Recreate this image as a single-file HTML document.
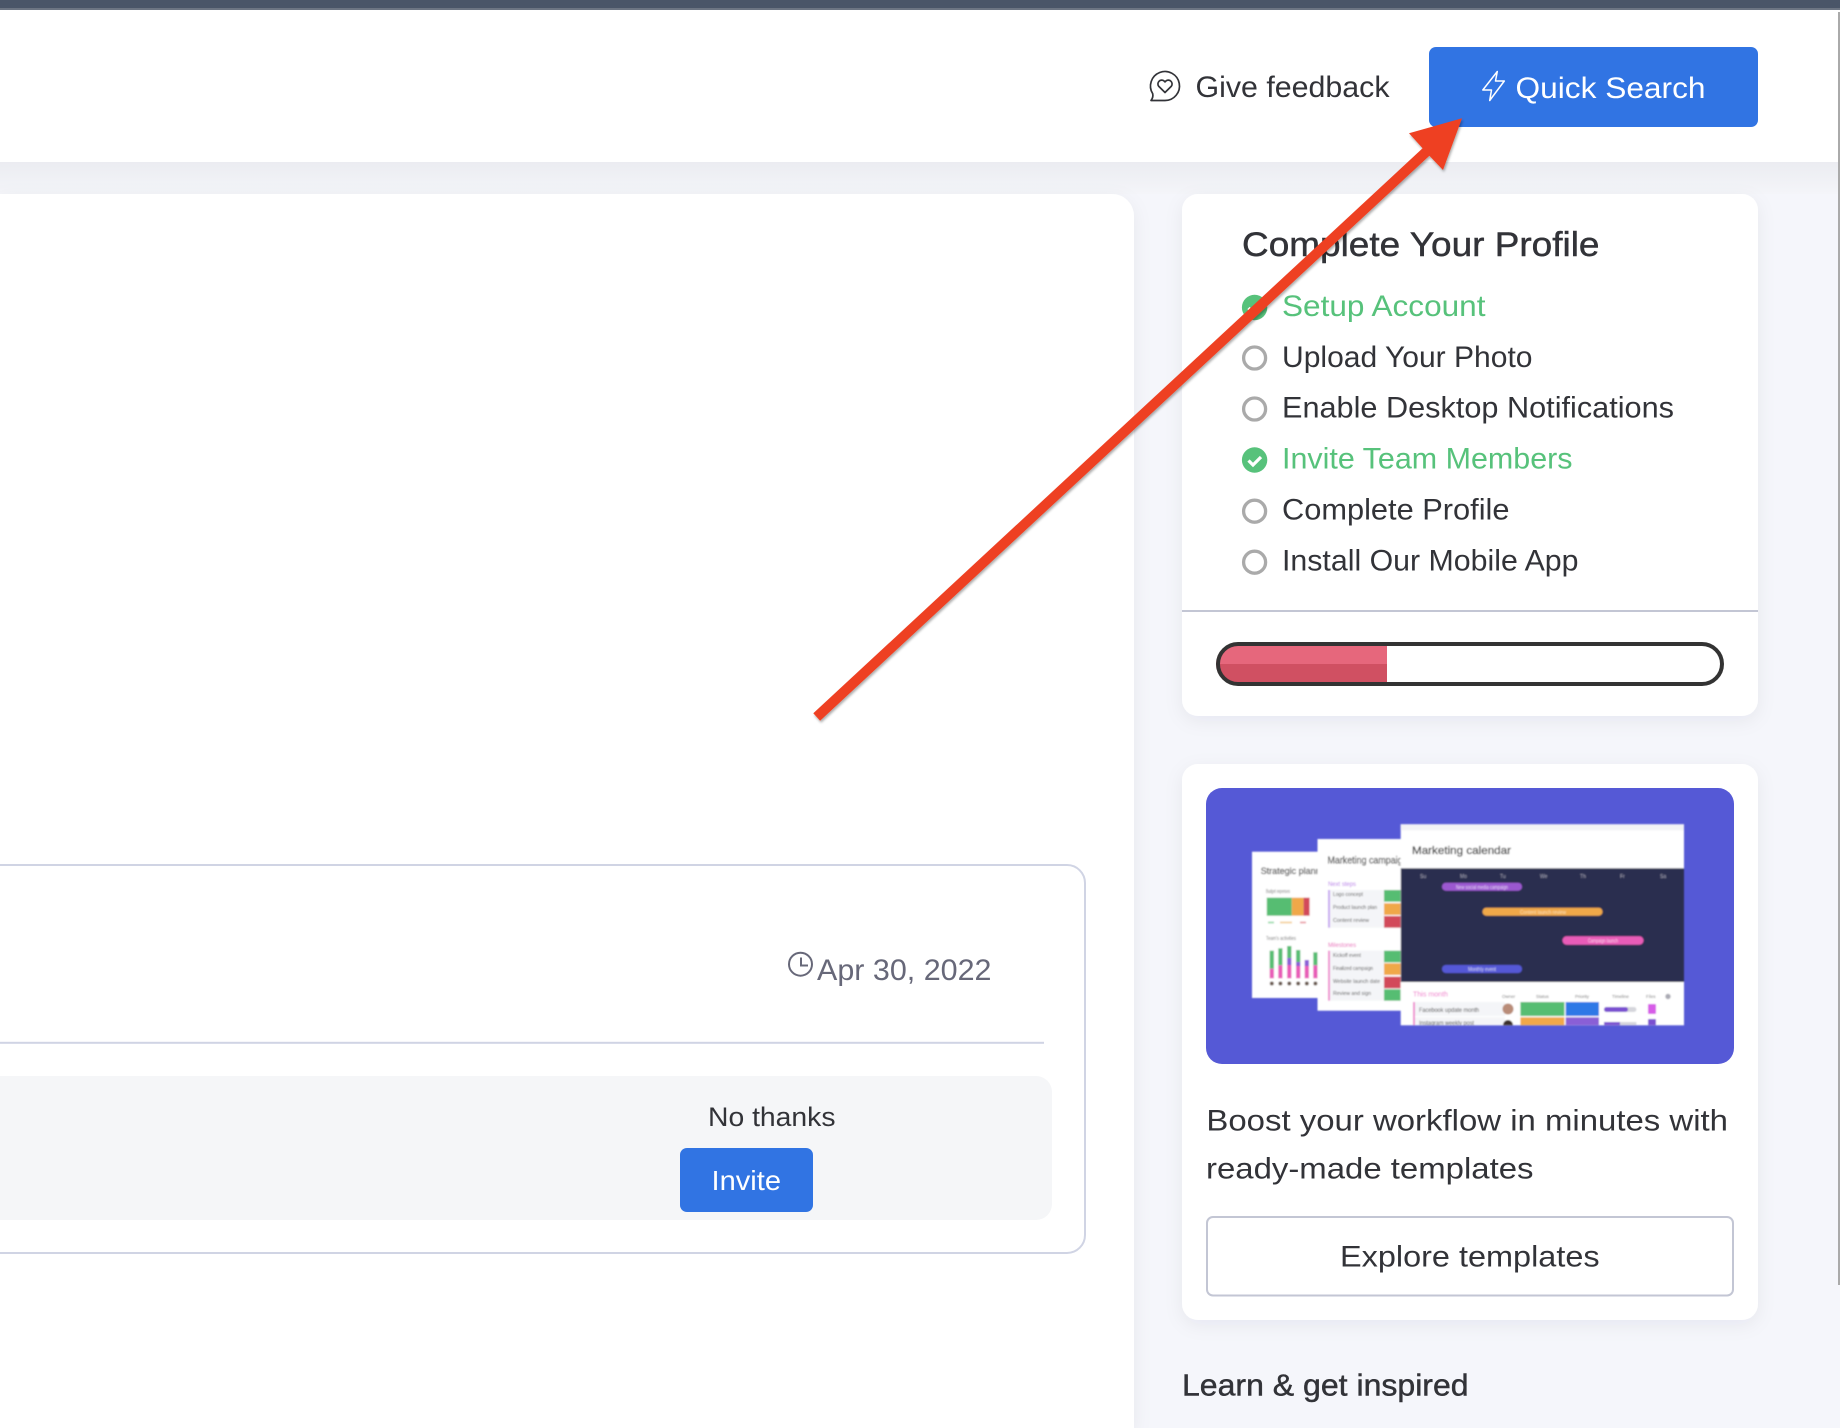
<!DOCTYPE html>
<html lang="en">
<head>
<meta charset="utf-8">
<title>Dashboard</title>
<style>
html,body{margin:0;padding:0;width:1840px;height:1428px;overflow:hidden;background:#f5f6fb}
svg{display:block}
text{font-family:"Liberation Sans",sans-serif;font-size:30px;fill:#323338}
.m{stroke:#323338;stroke-width:.45}
.g{fill:#57c27b}
.w{fill:#fff}
.i text{font-size:8px;fill:#555}
</style>
</head>
<body>
<svg width="1840" height="1428" viewBox="0 0 1840 1428" xmlns="http://www.w3.org/2000/svg">
<defs>
<linearGradient id="hs" x1="0" y1="0" x2="0" y2="1"><stop offset="0" stop-color="#ebecf1"/><stop offset="1" stop-color="#f4f5f9"/></linearGradient>
<filter id="cs" x="-10%" y="-10%" width="120%" height="125%"><feDropShadow dx="0" dy="5" stdDeviation="9" flood-color="#1f2a55" flood-opacity=".06"/></filter>
<filter id="as" x="-5%" y="-5%" width="110%" height="110%"><feDropShadow dx="1" dy="2" stdDeviation="1.3" flood-color="#000" flood-opacity=".33"/></filter>
<filter id="bl" x="-5%" y="-5%" width="110%" height="110%"><feGaussianBlur stdDeviation=".75"/></filter>
<clipPath id="ic"><rect x="1206" y="788" width="528" height="276" rx="16"/></clipPath>
<clipPath id="cc"><rect x="1400.7" y="824.3" width="283.3" height="201"/></clipPath>
<clipPath id="bc"><rect x="1317.5" y="839" width="83.2" height="172"/></clipPath>
<clipPath id="ac"><rect x="1252" y="851.7" width="65.5" height="146.3"/></clipPath>
</defs>

<!-- page background -->
<rect width="1840" height="1428" fill="#f5f6fb"/>
<rect y="162" width="1840" height="32" fill="url(#hs)"/>

<!-- top bar + header -->
<rect width="1840" height="162" fill="#fff"/>
<rect width="1840" height="8" fill="#4a5568"/>
<rect y="8" width="1840" height="2" fill="#6d7583"/>
<rect x="1838" y="12" width="2" height="1273" fill="#aaaaaa"/>

<!-- feedback -->
<g fill="none" stroke="#323338" stroke-width="1.7" stroke-linejoin="round" stroke-linecap="round">
<path d="M1151 100.5h14a14.5 14.5 0 1 0-12.300-6.800c.6 2.600-.3 5-1.700 6.800z"/>
<path d="M1165 92.500l-6.200-6.100a3.800 3.800 0 0 1 5.300-5.400l.9.900.9-.9a3.800 3.800 0 0 1 5.300 5.400z"/>
</g>
<text x="1195.500" y="97" textLength="194" lengthAdjust="spacingAndGlyphs">Give feedback</text>

<!-- quick search -->
<rect x="1429" y="47" width="329" height="80" rx="7" fill="#3174e3"/>
<path d="M1497.300 71.500L1482.800 90h8.700l-1.800 10.500L1504.300 81h-8.800z" fill="none" stroke="#fff" stroke-width="1.500" stroke-linejoin="round"/>
<text class="w" x="1515.500" y="98" textLength="190" lengthAdjust="spacingAndGlyphs">Quick Search</text>

<!-- main card -->
<path d="M0 194H1112a22 22 0 0 1 22 22V1428H0z" fill="#fff" filter="url(#cs)"/>

<!-- invite card -->
<rect x="-30" y="865" width="1115" height="388" rx="18" fill="#fff" stroke="#d0d4e4" stroke-width="2"/>
<circle cx="800.500" cy="964.200" r="11.500" fill="none" stroke="#676879" stroke-width="2"/>
<path d="M801 957.500V965.500H808" fill="none" stroke="#676879" stroke-width="2"/>
<text x="817" y="980" textLength="174.500" lengthAdjust="spacingAndGlyphs" style="fill:#676879">Apr 30, 2022</text>
<rect x="0" y="1041.800" width="1044" height="2" fill="#d0d4e4"/>
<path d="M0 1076H1036a16 16 0 0 1 16 16V1204a16 16 0 0 1-16 16H0z" fill="#f5f6f8"/>
<text x="708" y="1126" textLength="127.500" lengthAdjust="spacingAndGlyphs" style="font-size:27px">No thanks</text>
<rect x="680" y="1148" width="133" height="64" rx="7" fill="#3174e3"/>
<text class="w" x="711.500" y="1190" textLength="69.500" lengthAdjust="spacingAndGlyphs" style="font-size:28px">Invite</text>

<!-- profile card -->
<rect x="1182" y="194" width="576" height="522" rx="16" fill="#fff" filter="url(#cs)"/>
<text class="m" x="1242" y="256" textLength="357.500" lengthAdjust="spacingAndGlyphs" style="font-size:34px">Complete Your Profile</text>

<circle cx="1254.600" cy="307.500" r="12.700" fill="#57c27b"/>
<path d="M1248.500 308l4.500 4.500 8-8" fill="none" stroke="#fff" stroke-width="3.200"/>
<text class="g" x="1282" y="316" textLength="203.500" lengthAdjust="spacingAndGlyphs">Setup Account</text>

<g fill="none" stroke="#aaaaaa" stroke-width="3.300">
<circle cx="1254.600" cy="358" r="11"/>
<circle cx="1254.600" cy="409" r="11"/>
<circle cx="1254.600" cy="511.200" r="11"/>
<circle cx="1254.600" cy="562.200" r="11"/>
</g>
<text x="1282" y="367" textLength="250.500" lengthAdjust="spacingAndGlyphs">Upload Your Photo</text>
<text x="1282" y="417.500" textLength="392" lengthAdjust="spacingAndGlyphs">Enable Desktop Notifications</text>
<circle cx="1254.600" cy="460" r="12.700" fill="#57c27b"/>
<path d="M1248.500 460.500l4.500 4.500 8-8" fill="none" stroke="#fff" stroke-width="3.200"/>
<text class="g" x="1282" y="468.500" textLength="290.500" lengthAdjust="spacingAndGlyphs">Invite Team Members</text>
<text x="1282" y="519.500" textLength="227.500" lengthAdjust="spacingAndGlyphs">Complete Profile</text>
<text x="1282" y="570.500" textLength="296.500" lengthAdjust="spacingAndGlyphs">Install Our Mobile App</text>

<rect x="1182" y="610" width="576" height="2" fill="#c3c6d4"/>

<!-- progress -->
<path d="M1236 644H1387V684H1236a20 20 0 0 1 0-40z" fill="#e6677c"/>
<path d="M1218 664H1387V684H1236a20 20 0 0 1-18-20z" fill="#d05062"/>
<rect x="1218" y="644" width="504" height="40" rx="20" fill="none" stroke="#333333" stroke-width="4"/>

<!-- templates card -->
<rect x="1182" y="764" width="576" height="556" rx="16" fill="#fff" filter="url(#cs)"/>

<g clip-path="url(#ic)">
<rect x="1206" y="788" width="528" height="276" fill="#5559d6"/>
<g class="i" filter="url(#bl)">
  <!-- back sheet -->
  <rect x="1252" y="851.700" width="80" height="146.300" fill="#fff"/>
  <g clip-path="url(#ac)">
    <text x="1260.700" y="874" textLength="60" lengthAdjust="spacingAndGlyphs" style="font-size:9px;fill:#555;stroke:#555;stroke-width:.25">Strategic plann</text>
    <text x="1266" y="893" textLength="24" lengthAdjust="spacingAndGlyphs" style="font-size:5px;fill:#777">Budget expenses</text>
    <rect x="1266.800" y="897.700" width="25" height="18" fill="#57bd72"/>
    <rect x="1291.800" y="897.700" width="11.800" height="18" fill="#f0a848"/>
    <rect x="1303.600" y="897.700" width="6" height="18" fill="#d2485a"/>
    <rect x="1268" y="921.500" width="6" height="2" fill="#a6e0b6"/><rect x="1280" y="921.500" width="12" height="2" fill="#f5d6a5"/><rect x="1300" y="921.500" width="6" height="2" fill="#eda7b0"/>
    <text x="1266" y="940" textLength="30" lengthAdjust="spacingAndGlyphs" style="font-size:5px;fill:#777">Team's activities</text>
    <g>
      <rect x="1269.700" y="950.700" width="4.200" height="18" fill="#57bd72"/><rect x="1269.700" y="968.700" width="4.200" height="9.600" fill="#e85cb8"/>
      <rect x="1278.300" y="948.300" width="4.200" height="17" fill="#57bd72"/><rect x="1278.300" y="965.300" width="4.200" height="13" fill="#e85cb8"/>
      <rect x="1287.200" y="946" width="4.200" height="12" fill="#57bd72"/><rect x="1287.200" y="958" width="4.200" height="7" fill="#8a5fd6"/><rect x="1287.200" y="965" width="4.200" height="13.300" fill="#e85cb8"/>
      <rect x="1296.100" y="950" width="4.200" height="12" fill="#57bd72"/><rect x="1296.100" y="962" width="4.200" height="4" fill="#8a5fd6"/><rect x="1296.100" y="966" width="4.200" height="12.300" fill="#e85cb8"/>
      <rect x="1304.700" y="960" width="4.200" height="6" fill="#8a5fd6"/><rect x="1304.700" y="966" width="4.200" height="12.300" fill="#e85cb8"/>
      <rect x="1313.300" y="952.300" width="4.200" height="13" fill="#57bd72"/><rect x="1313.300" y="965.300" width="4.200" height="13" fill="#e85cb8"/>
    </g>
    <g fill="#6b5a50"><circle cx="1271.800" cy="983.500" r="2"/><circle cx="1280.400" cy="983.500" r="2"/><circle cx="1289.300" cy="983.500" r="2"/><circle cx="1298.200" cy="983.500" r="2"/><circle cx="1306.800" cy="983.500" r="2"/><circle cx="1315.400" cy="983.500" r="2"/></g>
  </g>
  <!-- middle sheet -->
  <rect x="1317.500" y="839" width="90" height="171.700" fill="#fff"/>
  <g clip-path="url(#bc)">
    <text x="1327.500" y="863.300" textLength="80" lengthAdjust="spacingAndGlyphs" style="font-size:10px;fill:#555;stroke:#555;stroke-width:.25">Marketing campaign</text>
    <text x="1328" y="886" textLength="28" lengthAdjust="spacingAndGlyphs" style="font-size:6px;fill:#b673e8">Next steps</text>
    <rect x="1329.500" y="890" width="55" height="37.700" fill="#f4f5f8"/>
    <rect x="1328" y="890" width="2" height="37.700" fill="#c7a8f0"/>
    <rect x="1384" y="890" width="17" height="11.700" fill="#57bd72"/>
    <rect x="1384" y="903.300" width="17" height="11.700" fill="#f0a848"/>
    <rect x="1384" y="916" width="17" height="11.700" fill="#d2485a"/>
    <text x="1333" y="896" textLength="30" lengthAdjust="spacingAndGlyphs" style="font-size:5px;fill:#555">Logo concept</text>
    <text x="1333" y="909" textLength="44" lengthAdjust="spacingAndGlyphs" style="font-size:5px;fill:#555">Product launch plan</text>
    <text x="1333" y="922" textLength="36" lengthAdjust="spacingAndGlyphs" style="font-size:5px;fill:#555">Content review</text>
    <text x="1328" y="947" textLength="28" lengthAdjust="spacingAndGlyphs" style="font-size:6px;fill:#e85cb8">Milestones</text>
    <rect x="1329.500" y="950.700" width="55" height="50" fill="#f4f5f8"/>
    <rect x="1328" y="950.700" width="2" height="50" fill="#ef8fd0"/>
    <rect x="1384" y="950.700" width="17" height="11.600" fill="#57bd72"/>
    <rect x="1384" y="963.300" width="17" height="11.700" fill="#f0a848"/>
    <rect x="1384" y="976.700" width="17" height="11.600" fill="#d2485a"/>
    <rect x="1384" y="989.300" width="17" height="11.400" fill="#57bd72"/>
    <text x="1333" y="957" textLength="28" lengthAdjust="spacingAndGlyphs" style="font-size:5px;fill:#555">Kickoff event</text>
    <text x="1333" y="970" textLength="40" lengthAdjust="spacingAndGlyphs" style="font-size:5px;fill:#555">Finalized campaign</text>
    <text x="1333" y="983" textLength="47" lengthAdjust="spacingAndGlyphs" style="font-size:5px;fill:#555">Website launch date</text>
    <text x="1333" y="995" textLength="38" lengthAdjust="spacingAndGlyphs" style="font-size:5px;fill:#555">Review and sign</text>
  </g>
  <!-- front sheet -->
  <rect x="1400.700" y="824.300" width="283.300" height="201" fill="#fff"/>
  <rect x="1400.700" y="824.300" width="283.300" height="6" fill="#f3f3f6"/>
  <g clip-path="url(#cc)">
    <text x="1412" y="854" textLength="99" lengthAdjust="spacingAndGlyphs" style="font-size:11px;fill:#444;stroke:#444;stroke-width:.3">Marketing calendar</text>
    <rect x="1400.700" y="868.300" width="283.300" height="113.700" fill="#2b2f4f"/>
    <text x="1420" y="878" style="font-size:5px;fill:#aab">Su</text><text x="1460" y="878" style="font-size:5px;fill:#aab">Mo</text><text x="1500" y="878" style="font-size:5px;fill:#aab">Tu</text><text x="1540" y="878" style="font-size:5px;fill:#aab">We</text><text x="1580" y="878" style="font-size:5px;fill:#aab">Th</text><text x="1620" y="878" style="font-size:5px;fill:#aab">Fr</text><text x="1660" y="878" style="font-size:5px;fill:#aab">Sa</text>
    <rect x="1442" y="882.700" width="80" height="8" rx="4" fill="#9b59d0"/>
    <text x="1456" y="889" textLength="52" lengthAdjust="spacingAndGlyphs" style="font-size:5px;fill:#e6d5f5">New social media campaign</text>
    <rect x="1482.500" y="907.700" width="120" height="8" rx="4" fill="#f0a848"/>
    <text x="1520" y="914" textLength="46" lengthAdjust="spacingAndGlyphs" style="font-size:5px;fill:#fae2bc">Content launch review</text>
    <rect x="1562.500" y="936.300" width="81" height="8.400" rx="4.200" fill="#e85cb8"/>
    <text x="1588" y="942.500" textLength="30" lengthAdjust="spacingAndGlyphs" style="font-size:5px;fill:#fbd4ee">Campaign launch</text>
    <rect x="1442" y="965" width="80" height="8" rx="4" fill="#5559d6"/>
    <text x="1468" y="971" textLength="28" lengthAdjust="spacingAndGlyphs" style="font-size:5px;fill:#d8d9f7">Monthly event</text>
    <text x="1413" y="996.500" textLength="35" lengthAdjust="spacingAndGlyphs" style="font-size:7.500px;fill:#ef6fcb">This month</text>
    <rect x="1413" y="1002" width="2" height="24" fill="#ef8fd0"/>
    <rect x="1415" y="1002" width="90" height="14" fill="#f4f5f8"/>
    <rect x="1415" y="1017.300" width="90" height="8" fill="#f4f5f8"/>
    <text x="1419" y="1012" textLength="60" lengthAdjust="spacingAndGlyphs" style="font-size:6.500px;fill:#444">Facebook update month</text>
    <text x="1419" y="1025" textLength="55" lengthAdjust="spacingAndGlyphs" style="font-size:6.500px;fill:#444">Instagram weekly post</text>
    <circle cx="1508" cy="1009" r="5.500" fill="#b98c78"/>
    <circle cx="1508" cy="1025" r="5" fill="#3a2d2a"/>
    <rect x="1520.400" y="1002" width="44" height="14" fill="#57bd72"/>
    <rect x="1565.700" y="1002" width="33.300" height="14" fill="#2f78e6"/>
    <rect x="1520.400" y="1017.300" width="44" height="9" fill="#f0a848"/>
    <rect x="1565.700" y="1017.300" width="33.300" height="9" fill="#8a5fd6"/>
    <rect x="1604" y="1007" width="32.400" height="5" rx="2.500" fill="#d5d6dc"/>
    <rect x="1604" y="1007" width="24" height="5" rx="2.500" fill="#7a4fd0"/>
    <rect x="1604" y="1022" width="32.400" height="4" fill="#d5d6dc"/>
    <rect x="1604" y="1022" width="16" height="4" fill="#7a4fd0"/>
    <rect x="1648" y="1004" width="8" height="10" rx="1" fill="#d75be8"/>
    <rect x="1648" y="1019" width="8" height="7" rx="1" fill="#7a4fd0"/>
    <circle cx="1668" cy="996.500" r="2.700" fill="#aaaab4"/>
    <text x="1502" y="998" style="font-size:4.500px;fill:#777">Owner</text><text x="1536" y="998" style="font-size:4.500px;fill:#777">Status</text><text x="1575" y="998" style="font-size:4.500px;fill:#777">Priority</text><text x="1612" y="998" style="font-size:4.500px;fill:#777">Timeline</text><text x="1646" y="998" style="font-size:4.500px;fill:#777">Files</text>
  </g>
</g>
</g>

<text x="1206.400" y="1130.700" textLength="521.600" lengthAdjust="spacingAndGlyphs">Boost your workflow in minutes with</text>
<text x="1206" y="1178.300" textLength="327.500" lengthAdjust="spacingAndGlyphs">ready-made templates</text>
<rect x="1207" y="1217" width="526" height="78.500" rx="6" fill="#fff" stroke="#c3c6d4" stroke-width="2"/>
<text x="1340" y="1266.700" textLength="259.600" lengthAdjust="spacingAndGlyphs">Explore templates</text>

<text class="m" x="1182" y="1395.700" textLength="286.600" lengthAdjust="spacingAndGlyphs" style="font-size:31px">Learn &amp; get inspired</text>

<!-- annotation arrow -->
<polygon points="813.300,713.300 820.100,720.700 1429.400,155.700 1443,170 1462,118.300 1409,133.300 1422.600,148.300" fill="#ee4023" filter="url(#as)"/>
</svg>
</body>
</html>
